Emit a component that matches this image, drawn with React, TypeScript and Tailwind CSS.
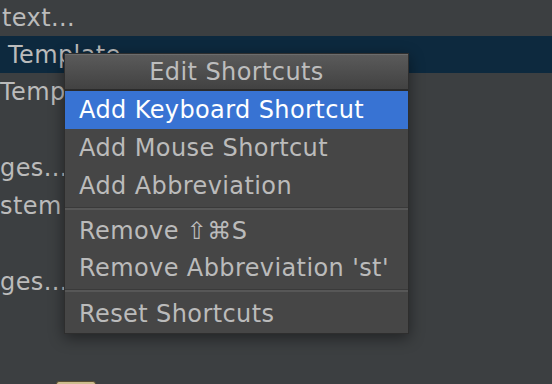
import React from "react";

const font = { fontFamily: '"DejaVu Sans", "Lucida Grande", sans-serif' };

export default function App() {
  return (
    <div
      className="relative w-[552px] h-[384px] overflow-hidden bg-[#3c3f41] text-[#bbbbbb] text-[24px] tracking-[0.4px]"
      style={font}
    >
      <div className="flex flex-col">
        <div className="h-[36px] flex items-center pl-[2px]">text...</div>
        <div className="h-[37px] flex items-center pl-[8px] bg-[#0d293e]">Template</div>
        <div className="h-[38px] flex items-center">Temp</div>
        <div className="h-[38px]"></div>
        <div className="h-[38px] flex items-center">ges...</div>
        <div className="h-[38px] flex items-center">stem</div>
        <div className="h-[38px]"></div>
        <div className="h-[38px] flex items-center">ges...</div>
        <div className="h-[38px]"></div>
        <div className="h-[38px] relative">
          <div className="absolute left-[56px] top-[42px] w-[40px] h-[10px] rounded-t-[3px] bg-[#cdbd8e] border border-[#5a4f33]"></div>
        </div>
      </div>

      <div className="absolute left-[64px] top-[53px] w-[345px] bg-[#464646] border border-[#2e2e2e] shadow-[0_4px_14px_rgba(0,0,0,0.45)] flex flex-col">
        <div className="h-[37px] flex items-center justify-center bg-gradient-to-b from-[#5a5a5a] to-[#424242] border-t border-[#6c6c6c] border-b-2 border-b-[#2b2b2b] text-[#bdbdbd]">
          Edit Shortcuts
        </div>
        <div className="h-[38px] flex items-center pl-[14px] bg-[#3873d3] text-white">
          Add Keyboard Shortcut
        </div>
        <div className="h-[38px] flex items-center pl-[14px]">Add Mouse Shortcut</div>
        <div className="h-[38px] flex items-center pl-[14px]">Add Abbreviation</div>
        <div className="h-[3px] my-[2px] bg-[#575757] border-t border-[#3a3a3a]"></div>
        <div className="h-[37px] flex items-center pl-[14px]">Remove ⇧⌘S</div>
        <div className="h-[38px] flex items-center pl-[14px]">Remove Abbreviation 'st'</div>
        <div className="h-[3px] my-[2px] bg-[#575757] border-t border-[#3a3a3a]"></div>
        <div className="h-[39px] flex items-center pl-[14px]">Reset Shortcuts</div>
      </div>
    </div>
  );
}
